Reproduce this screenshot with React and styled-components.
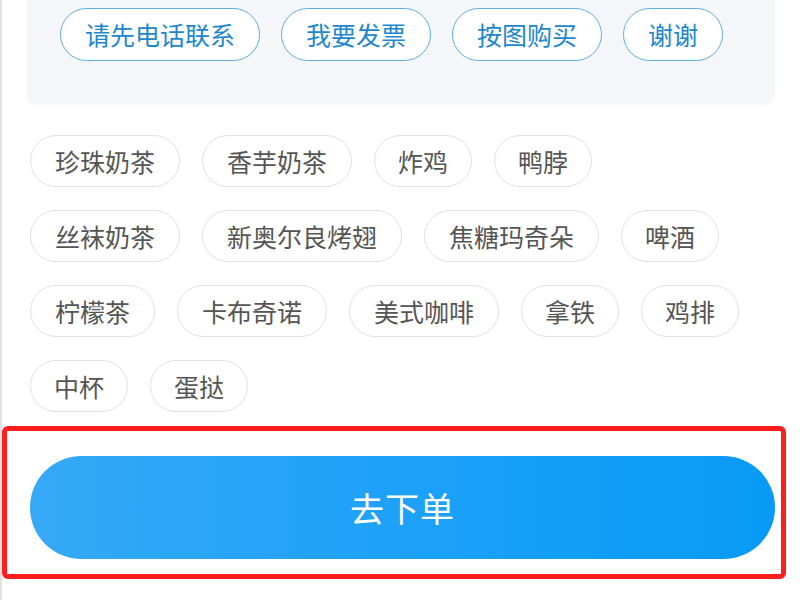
import React from 'react';
import styled, { createGlobalStyle } from 'styled-components';

const GlobalStyle = createGlobalStyle`
  html, body {
    margin: 0;
    padding: 0;
    background: #ffffff;
  }
  body {
    font-family: "Noto Sans CJK SC", "Noto Sans", sans-serif;
  }
`;

const Page = styled.div`
  width: 800px;
  height: 600px;
  overflow: hidden;
  box-sizing: border-box;
  border-left: 2px solid #e2e2e2;
  background: #ffffff;
`;

const QuickPanel = styled.div`
  margin: 0 25px 0 25px;
  height: 104px;
  box-sizing: border-box;
  padding: 8px 0 0 33px;
  background: #f5f6f9;
  border-radius: 0 0 12px 12px;
  box-shadow: 0 2px 3px rgba(0, 0, 0, 0.03);
  display: flex;
  align-items: flex-start;
  gap: 21px;
`;

const QuickChip = styled.span`
  height: 53px;
  box-sizing: border-box;
  padding: 0 24px;
  display: inline-flex;
  align-items: center;
  border: 1.5px solid #5eaedd;
  border-radius: 27px;
  background: #ffffff;
  color: #1e87cc;
  font-size: 25px;
  line-height: 1;
  white-space: nowrap;
`;

const TagArea = styled.div`
  padding: 31px 0 0 28px;
  width: 720px;
  display: flex;
  flex-wrap: wrap;
  gap: 23px 22px;
`;

const Tag = styled.span`
  height: 52px;
  box-sizing: border-box;
  padding: 0 ${(p) => (p.$short ? 23 : 24)}px;
  display: inline-flex;
  align-items: center;
  border: 1px solid #e1e1e1;
  border-radius: 26px;
  background: #ffffff;
  color: #555555;
  font-size: 25px;
  line-height: 1;
  white-space: nowrap;
`;

const Highlight = styled.div`
  margin: 14px 0 0 0;
  width: 784px;
  height: 153px;
  box-sizing: border-box;
  border: 5px solid #ff1d1d;
  border-radius: 6px;
  padding: 25px 6px 0 23px;
`;

const OrderButton = styled.button`
  width: 100%;
  height: 103px;
  border: none;
  border-radius: 52px;
  background: linear-gradient(90deg, #36a9f7 0%, #1fa2f8 45%, #089af6 100%);
  color: #ffffff;
  font-family: "Noto Sans CJK SC", "Noto Sans", sans-serif;
  font-size: 34px;
  letter-spacing: 1px;
  padding: 0;
  display: flex;
  align-items: center;
  justify-content: center;
`;

const quick = ['请先电话联系', '我要发票', '按图购买', '谢谢'];

const tags = [
  '珍珠奶茶', '香芋奶茶', '炸鸡', '鸭脖',
  '丝袜奶茶', '新奥尔良烤翅', '焦糖玛奇朵', '啤酒',
  '柠檬茶', '卡布奇诺', '美式咖啡', '拿铁', '鸡排',
  '中杯', '蛋挞'
];

export default function App() {
  return (
    <>
      <GlobalStyle />
      <Page>
        <QuickPanel>
          {quick.map((q) => (
            <QuickChip key={q}>{q}</QuickChip>
          ))}
        </QuickPanel>
        <TagArea>
          {tags.map((t) => (
            <Tag key={t} $short={t.length <= 2}>
              {t}
            </Tag>
          ))}
        </TagArea>
        <Highlight>
          <OrderButton>去下单</OrderButton>
        </Highlight>
      </Page>
    </>
  );
}
